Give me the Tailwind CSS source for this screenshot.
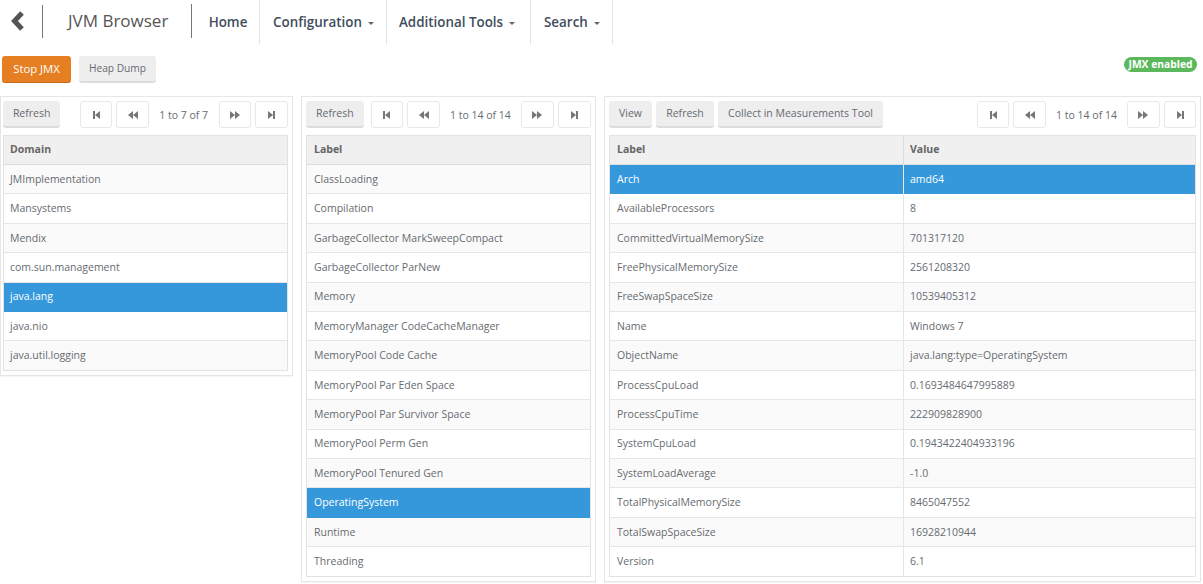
<!DOCTYPE html>
<html><head><meta charset="utf-8"><title>JVM Browser</title>
<script src="https://cdn.jsdelivr.net/npm/@tailwindcss/browser@4"></script></head>
<body class="bg-white overflow-hidden">
<div class="w-[1203px] h-[584px] overflow-hidden font-['Open_Sans',sans-serif] text-[10.5px] text-[#666b70]">
 <header class="h-11 flex items-stretch whitespace-nowrap">
  <div class="w-[42px] flex items-center pl-[10px]">
   <svg width="16" height="20" viewBox="0 0 16 20" class="-mt-[2px]"><path d="M12 2 L4.5 10 L12 18" fill="none" stroke="#555" stroke-width="5"/></svg>
  </div>
  <div class="flex items-center"><div class="w-px h-[33px] bg-[#777] -mt-[2px]"></div></div>
  <div class="w-[148px] flex items-center pl-[25px] text-[17px] text-[#555] -mt-[3px]">JVM Browser</div>
  <div class="flex items-center"><div class="w-px h-[34px] bg-[#777] -mt-[2px]"></div></div>
  <nav class="flex text-[13.4px] font-semibold text-[#3f4d5c]">
   <a class="w-[68px] flex items-center justify-center border-r border-[#e4e4e4] pl-[5px] pt-[1px]">Home</a>
   <a class="w-[127px] flex items-center pl-[13px] pt-[1px] gap-[6px] border-r border-[#e4e4e4]">Configuration<i class="block mt-[2px] border-x-[3px] border-x-transparent border-t-[3px] border-t-[#666]"></i></a>
   <a class="w-[144px] flex items-center pl-[12px] pt-[1px] gap-[6px] border-r border-[#e4e4e4]">Additional Tools<i class="block mt-[2px] border-x-[3px] border-x-transparent border-t-[3px] border-t-[#666]"></i></a>
   <a class="w-[82px] flex items-center pl-[13px] pt-[1px] gap-[6px] border-r border-[#e4e4e4]">Search<i class="block mt-[2px] border-x-[3px] border-x-transparent border-t-[3px] border-t-[#666]"></i></a>
  </nav>
 </header>
 <div class="h-[52px] flex items-start pt-[12px] pl-[2px] relative">
  <button class="h-[27px] w-[69px] rounded-[3px] bg-[#e67e22] text-white text-[11.3px] border-b border-[#c96c1a]">Stop JMX</button>
  <button class="h-[27px] w-[77px] ml-[8px] rounded-[3px] bg-[#eeeeef] text-[10.2px] border-b-2 border-[#dcdcdf]">Heap Dump</button>
  <span class="absolute right-[6px] top-[13px] h-[15px] w-[73px] rounded-full bg-[#5cb85c] text-white text-[10.3px] font-bold flex items-center justify-center">JMX enabled</span>
 </div>
 <main class="flex items-start">

  <section class="w-[293px] border border-[#e6e6e6] py-[4px] pl-[2px] pr-[4px] shadow-[0_1px_1px_rgba(0,0,0,0.04)]">
   <div class="h-[34px] flex items-start">
    <button class="h-[27px] w-[58px] rounded-[3px] bg-[#eeeeef] border-b-2 border-[#dcdcdf] mr-[20px]">Refresh</button>
    <button class="w-[32px] h-[27px] border border-[#e8e8e8] rounded-[3px] flex items-center justify-center"><svg width="9" height="10" viewBox="0 0 9 10"><path d="M1 1h2v8H1zM8 1v8L3 5z" fill="#777"/></svg></button>
    <button class="w-[33px] h-[27px] ml-[4px] border border-[#e8e8e8] rounded-[3px] flex items-center justify-center"><svg width="11" height="10" viewBox="0 0 11 10"><path d="M6 1v8L1 5zM11 1v8L6 5z" fill="#777"/></svg></button>
    <span class="w-[71px] h-[27px] pt-[2px] flex items-center justify-center">1 to 7 of 7</span>
    <button class="w-[33px] h-[27px] border border-[#e8e8e8] rounded-[3px] flex items-center justify-center"><svg width="11" height="10" viewBox="0 0 11 10"><path d="M0 1v8l5-4zM5 1v8l5-4z" fill="#777"/></svg></button>
    <button class="w-[33px] h-[27px] ml-[4px] border border-[#e8e8e8] rounded-[3px] flex items-center justify-center"><svg width="9" height="10" viewBox="0 0 9 10"><path d="M1 1v8l5-4zM6 1h2v8H6z" fill="#777"/></svg></button>
   </div>
   <div class="border border-[#e2e2e2] [&>div]:pl-[6px] [&>div:nth-child(n+2)]:pt-[1px]">
    <div class="h-[29px] bg-[#f0f0f0] border-b border-[#ddd] flex items-center px-[7px] font-bold text-[#666]">Domain</div>
    <div class="h-[29.4px] bg-[#fafafa] border-b border-[#e6e6e6] flex items-center px-[7px]">JMImplementation</div>
    <div class="h-[29.4px] border-b border-[#e6e6e6] flex items-center px-[7px]">Mansystems</div>
    <div class="h-[29.4px] bg-[#fafafa] border-b border-[#e6e6e6] flex items-center px-[7px]">Mendix</div>
    <div class="h-[29.4px] border-b border-[#e6e6e6] flex items-center px-[7px]">com.sun.management</div>
    <div class="h-[29.4px] bg-[#3498db] text-white border-b border-[#3498db] flex items-center px-[7px]">java.lang</div>
    <div class="h-[29.4px] border-b border-[#e6e6e6] flex items-center px-[7px]">java.nio</div>
    <div class="h-[29px] bg-[#fafafa] flex items-center px-[7px]">java.util.logging</div>
   </div>
  </section>

  <section class="w-[295px] ml-[8px] border border-[#e6e6e6] p-[4px] shadow-[0_1px_1px_rgba(0,0,0,0.04)]">
   <div class="h-[34px] flex items-start">
    <button class="h-[27px] w-[58px] rounded-[3px] bg-[#eeeeef] border-b-2 border-[#dcdcdf] mr-[7px]">Refresh</button>
    <button class="w-[32px] h-[27px] border border-[#e8e8e8] rounded-[3px] flex items-center justify-center"><svg width="9" height="10" viewBox="0 0 9 10"><path d="M1 1h2v8H1zM8 1v8L3 5z" fill="#777"/></svg></button>
    <button class="w-[33px] h-[27px] ml-[4px] border border-[#e8e8e8] rounded-[3px] flex items-center justify-center"><svg width="11" height="10" viewBox="0 0 11 10"><path d="M6 1v8L1 5zM11 1v8L6 5z" fill="#777"/></svg></button>
    <span class="w-[82px] h-[27px] pt-[2px] flex items-center justify-center">1 to 14 of 14</span>
    <button class="w-[33px] h-[27px] border border-[#e8e8e8] rounded-[3px] flex items-center justify-center"><svg width="11" height="10" viewBox="0 0 11 10"><path d="M0 1v8l5-4zM5 1v8l5-4z" fill="#777"/></svg></button>
    <button class="w-[33px] h-[27px] ml-[4px] border border-[#e8e8e8] rounded-[3px] flex items-center justify-center"><svg width="9" height="10" viewBox="0 0 9 10"><path d="M1 1v8l5-4zM6 1h2v8H6z" fill="#777"/></svg></button>
   </div>
   <div class="border border-[#e2e2e2] [&>div:nth-child(n+2)]:pt-[1px]">
    <div class="h-[29px] bg-[#f0f0f0] border-b border-[#ddd] flex items-center px-[7px] font-bold text-[#666]">Label</div>
    <div class="h-[29.4px] bg-[#fafafa] border-b border-[#e6e6e6] flex items-center px-[7px]">ClassLoading</div>
    <div class="h-[29.4px] border-b border-[#e6e6e6] flex items-center px-[7px]">Compilation</div>
    <div class="h-[29.4px] bg-[#fafafa] border-b border-[#e6e6e6] flex items-center px-[7px]">GarbageCollector MarkSweepCompact</div>
    <div class="h-[29.4px] border-b border-[#e6e6e6] flex items-center px-[7px]">GarbageCollector ParNew</div>
    <div class="h-[29.4px] bg-[#fafafa] border-b border-[#e6e6e6] flex items-center px-[7px]">Memory</div>
    <div class="h-[29.4px] border-b border-[#e6e6e6] flex items-center px-[7px]">MemoryManager CodeCacheManager</div>
    <div class="h-[29.4px] bg-[#fafafa] border-b border-[#e6e6e6] flex items-center px-[7px]">MemoryPool Code Cache</div>
    <div class="h-[29.4px] border-b border-[#e6e6e6] flex items-center px-[7px]">MemoryPool Par Eden Space</div>
    <div class="h-[29.4px] bg-[#fafafa] border-b border-[#e6e6e6] flex items-center px-[7px]">MemoryPool Par Survivor Space</div>
    <div class="h-[29.4px] border-b border-[#e6e6e6] flex items-center px-[7px]">MemoryPool Perm Gen</div>
    <div class="h-[29.4px] bg-[#fafafa] border-b border-[#e6e6e6] flex items-center px-[7px]">MemoryPool Tenured Gen</div>
    <div class="h-[29.4px] bg-[#3498db] text-white border-b border-[#3498db] flex items-center px-[7px]">OperatingSystem</div>
    <div class="h-[29.4px] bg-[#fafafa] border-b border-[#e6e6e6] flex items-center px-[7px]">Runtime</div>
    <div class="h-[29px] flex items-center px-[7px]">Threading</div>
   </div>
  </section>

  <section class="w-[597px] ml-[8px] border border-[#e6e6e6] p-[4px] shadow-[0_1px_1px_rgba(0,0,0,0.04)]">
   <div class="h-[34px] flex items-start">
    <button class="h-[27px] w-[43px] rounded-[3px] bg-[#eeeeef] border-b-2 border-[#dcdcdf]">View</button>
    <button class="h-[27px] w-[58px] ml-[4px] rounded-[3px] bg-[#eeeeef] border-b-2 border-[#dcdcdf]">Refresh</button>
    <button class="h-[27px] w-[165px] ml-[4px] rounded-[3px] bg-[#eeeeef] border-b-2 border-[#dcdcdf]">Collect in Measurements Tool</button>
    <button class="w-[32px] h-[27px] ml-auto border border-[#e8e8e8] rounded-[3px] flex items-center justify-center"><svg width="9" height="10" viewBox="0 0 9 10"><path d="M1 1h2v8H1zM8 1v8L3 5z" fill="#777"/></svg></button>
    <button class="w-[33px] h-[27px] ml-[4px] border border-[#e8e8e8] rounded-[3px] flex items-center justify-center"><svg width="11" height="10" viewBox="0 0 11 10"><path d="M6 1v8L1 5zM11 1v8L6 5z" fill="#777"/></svg></button>
    <span class="w-[81px] h-[27px] pt-[2px] flex items-center justify-center">1 to 14 of 14</span>
    <button class="w-[33px] h-[27px] border border-[#e8e8e8] rounded-[3px] flex items-center justify-center"><svg width="11" height="10" viewBox="0 0 11 10"><path d="M0 1v8l5-4zM5 1v8l5-4z" fill="#777"/></svg></button>
    <button class="w-[32px] h-[27px] ml-[4px] border border-[#e8e8e8] rounded-[3px] flex items-center justify-center"><svg width="9" height="10" viewBox="0 0 9 10"><path d="M1 1v8l5-4zM6 1h2v8H6z" fill="#777"/></svg></button>
   </div>
   <div class="border border-[#e2e2e2] grid grid-cols-[294px_1fr] [&>div:nth-child(even)]:pl-[6px] [&>div:nth-child(n+3)]:pt-[1px]">
    <div class="h-[29px] bg-[#f0f0f0] border-b border-r border-[#ddd] flex items-center px-[7px] font-bold text-[#666]">Label</div><div class="h-[29px] bg-[#f0f0f0] border-b border-[#ddd] flex items-center px-[7px] font-bold text-[#666]">Value</div>
    <div class="h-[29.4px] bg-[#3498db] text-white border-r border-[#e6e6e6] flex items-center px-[7px]">Arch</div><div class="h-[29.4px] bg-[#3498db] text-white flex items-center px-[7px]">amd64</div>
    <div class="h-[29.4px] border-b border-r border-[#e6e6e6] flex items-center px-[7px]">AvailableProcessors</div><div class="h-[29.4px] border-b border-[#e6e6e6] flex items-center px-[7px]">8</div>
    <div class="h-[29.4px] bg-[#fafafa] border-b border-r border-[#e6e6e6] flex items-center px-[7px]">CommittedVirtualMemorySize</div><div class="h-[29.4px] bg-[#fafafa] border-b border-[#e6e6e6] flex items-center px-[7px]">701317120</div>
    <div class="h-[29.4px] border-b border-r border-[#e6e6e6] flex items-center px-[7px]">FreePhysicalMemorySize</div><div class="h-[29.4px] border-b border-[#e6e6e6] flex items-center px-[7px]">2561208320</div>
    <div class="h-[29.4px] bg-[#fafafa] border-b border-r border-[#e6e6e6] flex items-center px-[7px]">FreeSwapSpaceSize</div><div class="h-[29.4px] bg-[#fafafa] border-b border-[#e6e6e6] flex items-center px-[7px]">10539405312</div>
    <div class="h-[29.4px] border-b border-r border-[#e6e6e6] flex items-center px-[7px]">Name</div><div class="h-[29.4px] border-b border-[#e6e6e6] flex items-center px-[7px]">Windows 7</div>
    <div class="h-[29.4px] bg-[#fafafa] border-b border-r border-[#e6e6e6] flex items-center px-[7px]">ObjectName</div><div class="h-[29.4px] bg-[#fafafa] border-b border-[#e6e6e6] flex items-center px-[7px]">java.lang:type=OperatingSystem</div>
    <div class="h-[29.4px] border-b border-r border-[#e6e6e6] flex items-center px-[7px]">ProcessCpuLoad</div><div class="h-[29.4px] border-b border-[#e6e6e6] flex items-center px-[7px]">0.1693484647995889</div>
    <div class="h-[29.4px] bg-[#fafafa] border-b border-r border-[#e6e6e6] flex items-center px-[7px]">ProcessCpuTime</div><div class="h-[29.4px] bg-[#fafafa] border-b border-[#e6e6e6] flex items-center px-[7px]">222909828900</div>
    <div class="h-[29.4px] border-b border-r border-[#e6e6e6] flex items-center px-[7px]">SystemCpuLoad</div><div class="h-[29.4px] border-b border-[#e6e6e6] flex items-center px-[7px]">0.1943422404933196</div>
    <div class="h-[29.4px] bg-[#fafafa] border-b border-r border-[#e6e6e6] flex items-center px-[7px]">SystemLoadAverage</div><div class="h-[29.4px] bg-[#fafafa] border-b border-[#e6e6e6] flex items-center px-[7px]">-1.0</div>
    <div class="h-[29.4px] border-b border-r border-[#e6e6e6] flex items-center px-[7px]">TotalPhysicalMemorySize</div><div class="h-[29.4px] border-b border-[#e6e6e6] flex items-center px-[7px]">8465047552</div>
    <div class="h-[29.4px] bg-[#fafafa] border-b border-r border-[#e6e6e6] flex items-center px-[7px]">TotalSwapSpaceSize</div><div class="h-[29.4px] bg-[#fafafa] border-b border-[#e6e6e6] flex items-center px-[7px]">16928210944</div>
    <div class="h-[29px] border-r border-[#e6e6e6] flex items-center px-[7px]">Version</div><div class="h-[29px] flex items-center px-[7px]">6.1</div>
   </div>
  </section>
 </main>
</div>
</body></html>
